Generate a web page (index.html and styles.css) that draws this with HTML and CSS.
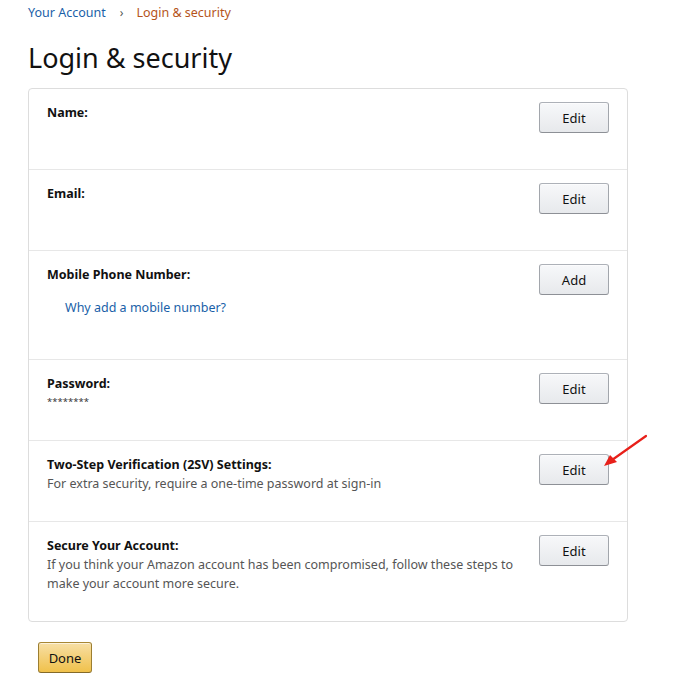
FILE: index.html
```html
<!DOCTYPE html>
<html lang="en">
<head>
<meta charset="utf-8">
<title>Login &amp; security</title>
<link rel="stylesheet" href="styles.css">
</head>
<body>
<div class="page">
  <nav class="crumbs">
    <a class="crumb-link" href="#">Your Account</a>
    <span class="crumb-sep">›</span>
    <span class="crumb-current">Login &amp; security</span>
  </nav>
  <h1 class="title">Login &amp; security</h1>

  <div class="card">
    <div class="row">
      <div class="info">
        <div class="label">Name:</div>
        <div class="value"></div>
      </div>
      <button class="btn">Edit</button>
    </div>
    <div class="row">
      <div class="info">
        <div class="label">Email:</div>
        <div class="value blurred"></div>
      </div>
      <button class="btn">Edit</button>
    </div>
    <div class="row">
      <div class="info">
        <div class="label">Mobile Phone Number:</div>
        <div class="why"><a class="link" href="#">Why add a mobile number?</a></div>
      </div>
      <button class="btn">Add</button>
    </div>
    <div class="row">
      <div class="info">
        <div class="label">Password:</div>
        <div class="value stars">********</div>
      </div>
      <button class="btn">Edit</button>
    </div>
    <div class="row">
      <div class="info">
        <div class="label">Two-Step Verification (2SV) Settings:</div>
        <div class="value">For extra security, require a one-time password at sign-in</div>
      </div>
      <button class="btn">Edit</button>
    </div>
    <div class="row">
      <div class="info">
        <div class="label">Secure Your Account:</div>
        <div class="value">If you think your Amazon account has been compromised, follow these steps to make your account more secure.</div>
      </div>
      <button class="btn">Edit</button>
    </div>
  </div>

  <div class="actions">
    <button class="btn btn-primary">Done</button>
  </div>

  <svg class="arrow" width="60" height="50" viewBox="0 0 60 50">
    <line x1="52" y1="5" x2="18" y2="29" stroke="#e8201a" stroke-width="2.2" stroke-linecap="round"/>
    <polygon points="10,35 16,24 23,31" fill="#e8201a"/>
  </svg>
</div>
</body>
</html>
```

FILE: styles.css
```css
* { box-sizing: border-box; }

html, body {
  margin: 0;
  padding: 0;
  background: #fff;
}

body {
  font-family: "Noto Sans", "Open Sans", Arial, sans-serif;
  font-size: 12.5px;
  line-height: 19px;
  color: #111;
}

.page {
  position: relative;
  padding: 3px 28px 0 28px;
  width: 678px;
}

.crumbs {
  display: flex;
  align-items: center;
  height: 19px;
  font-size: 12.5px;
}

.crumb-link {
  color: #1a5fa8;
  text-decoration: none;
}

.crumb-sep {
  color: #555;
  margin: 0 13px 0 14px;
  font-size: 12px;
}

.crumb-current {
  color: #b5541a;
}

.title {
  margin: 18px 0 12px 0;
  font-size: 27px;
  line-height: 36px;
  font-weight: 400;
  color: #111;
}

.card {
  width: 600px;
  border: 1px solid #ddd;
  border-radius: 4px;
}

.row {
  display: flex;
  align-items: flex-start;
  justify-content: space-between;
  padding: 14px 18px 28px 18px;
  border-bottom: 1px solid #e7e7e7;
}

.row:last-child {
  border-bottom: none;
}

.info {
  width: 482px;
}

.label {
  font-weight: 700;
  color: #111;
  height: 19px;
}

.value {
  min-height: 19px;
  color: #555;
}

.stars {
  font-size: 9.5px;
  color: #333;
  line-height: 18px;
  min-height: 19px;
}

.why {
  padding: 14px 0 14px 18px;
}

.link {
  color: #1a5fa8;
  text-decoration: none;
}

.btn {
  margin-top: -1px;
  width: 70px;
  height: 31px;
  font-family: inherit;
  font-size: 13px;
  color: #111;
  background: linear-gradient(to bottom, #f7f8fa, #e7e9ec);
  border: 1px solid;
  border-color: #adb1b8 #a2a6ac #8d9096;
  border-radius: 3px;
  box-shadow: 0 1px 0 rgba(255,255,255,.6) inset;
  padding: 0;
  cursor: pointer;
}

.actions {
  padding: 20px 0 0 10px;
}

.btn-primary {
  margin-top: 0;
  width: 54px;
  background: linear-gradient(to bottom, #f7dfa5, #f0c14b);
  border-color: #a88734 #9c7e31 #846a29;
}

.arrow {
  position: absolute;
  left: 594px;
  top: 431px;
}
```
